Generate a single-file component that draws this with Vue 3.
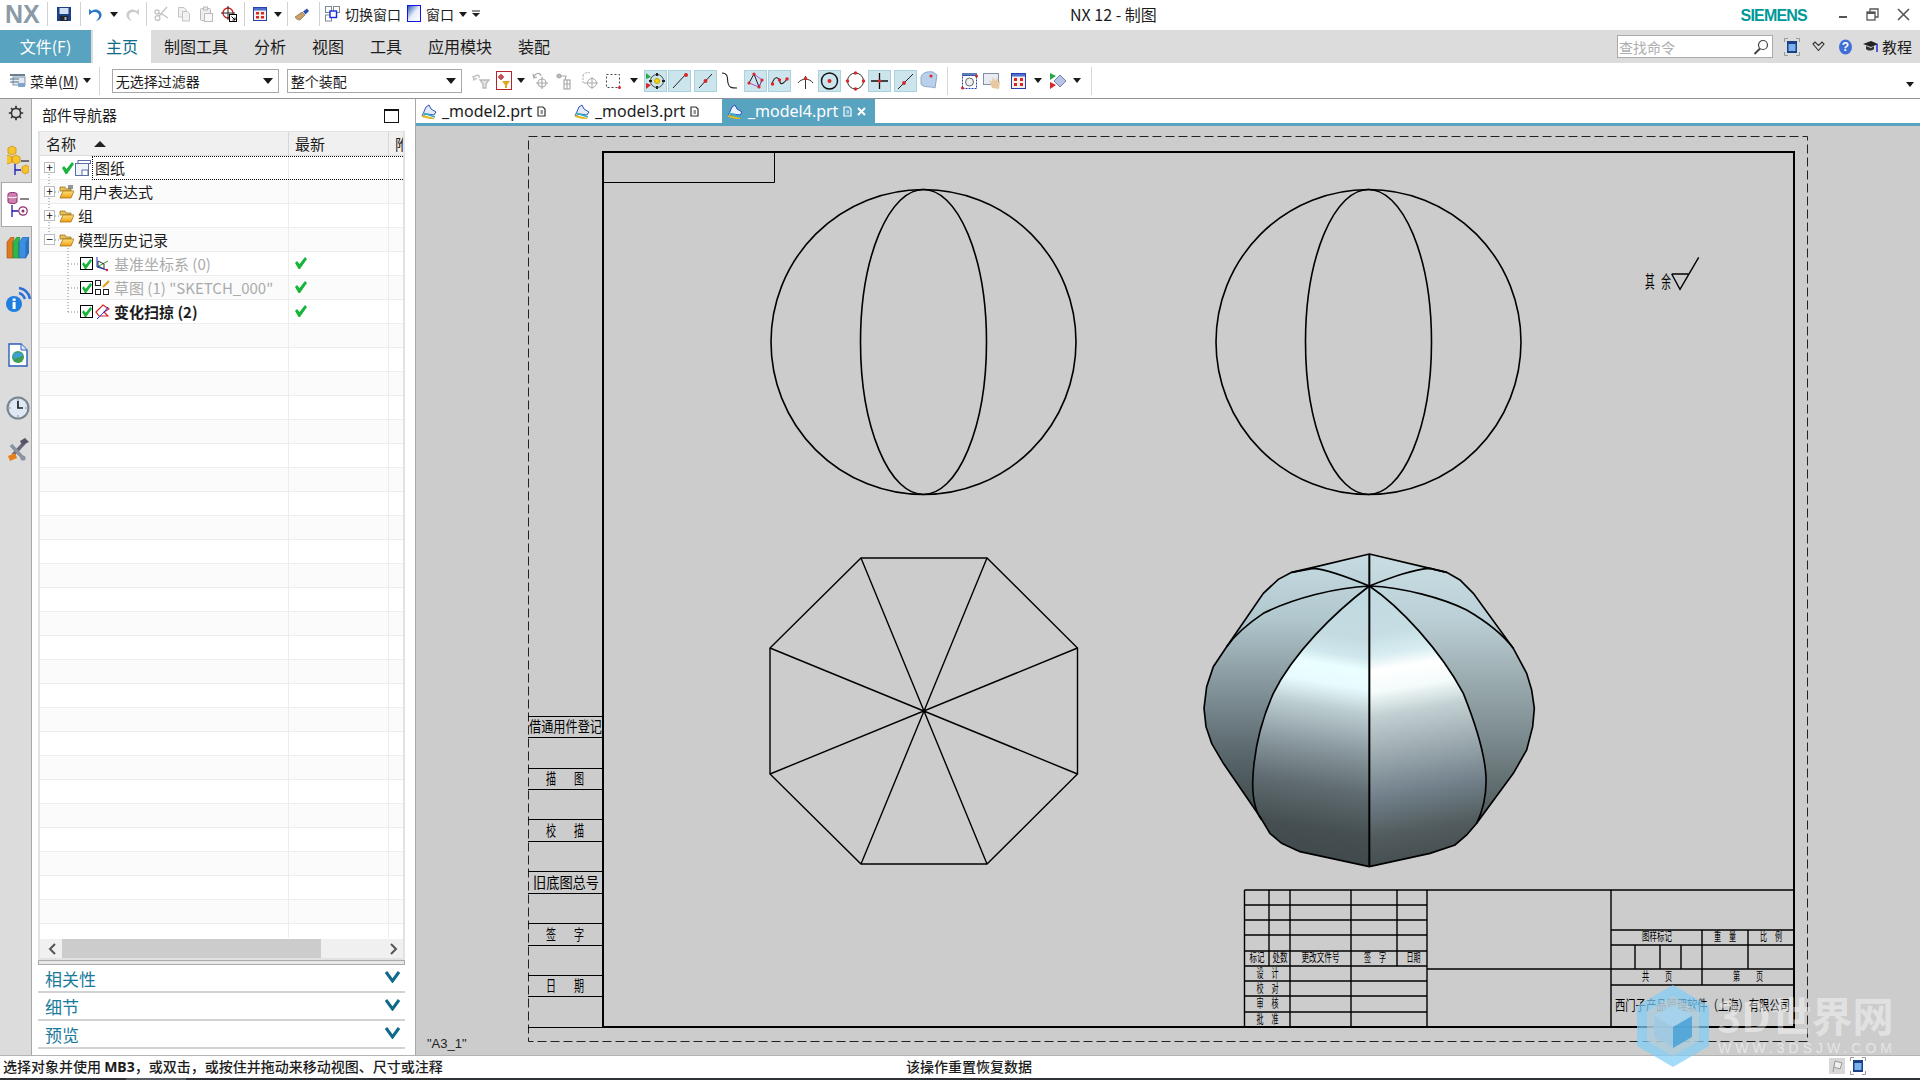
<template>
  <div class="app">
    <!-- title bar -->
    <header class="titlebar">
      <div class="qat">
        <span class="nx">NX</span>
        <i class="qsep"></i>
        <div class="qgrp g1">
          <svg width="16" height="16" viewBox="0 0 16 16"><rect x="1" y="1" width="14" height="14" fill="#1c3f86"/><rect x="3.5" y="2" width="9" height="6" fill="#cfe0f5"/><rect x="4" y="10" width="8" height="5" fill="#20242c"/><rect x="8.5" y="11" width="2" height="3" fill="#aab4c4"/></svg>
        </div>
        <i class="qsep"></i>
        <div class="qgrp g2">
          <svg width="14" height="16" viewBox="0 0 14 16"><path d="M1 3 V9 L3 7.5 C6 5 10 6 11 9 C11.5 11 10 13 8 15 C12 14 14 11 13.5 8 C12.5 3.5 7 2 3.5 5 Z" fill="#2a78c8"/></svg>
          <i class="arr"></i>
          <svg width="14" height="16" viewBox="0 0 14 16"><path d="M13 3 V9 L11 7.5 C8 5 4 6 3 9 C2.5 11 4 13 6 15 C2 14 0 11 .5 8 C1.5 3.5 7 2 10.5 5 Z" fill="#ccc"/></svg>
        </div>
        <i class="qsep"></i>
        <div class="qgrp g3">
          <svg width="15" height="16" viewBox="0 0 15 16" fill="none" stroke="#c4c4c4" stroke-width="1.4"><path d="M13 1 L5 10 M8 8 L14 12"/><circle cx="3.5" cy="12" r="2.4"/><circle cx="3" cy="6" r="2"/><path d="M4.5 7 L8 9"/></svg>
          <svg width="14" height="16" viewBox="0 0 14 16" fill="#f1f1f1" stroke="#c4c4c4"><path d="M1.5 1.5 H7 L9 3.5 V11 H1.5 Z"/><path d="M5.5 5.5 H10.5 L12.5 7.5 V15 H5.5 Z"/></svg>
          <svg width="14" height="16" viewBox="0 0 14 16" fill="#eee" stroke="#bbb"><rect x="1.5" y="2.5" width="10" height="12" rx="1"/><rect x="4.5" y="1" width="4" height="3"/><rect x="5.5" y="7.5" width="8" height="8" fill="#f8f8f8"/></svg>
          <svg width="16" height="16" viewBox="0 0 16 16" fill="none"><circle cx="7" cy="7" r="5" stroke="#cf1c1c" stroke-width="1.3"/><path d="M7 0 V14 M0 7 H14" stroke="#222"/><rect x="8.5" y="8.5" width="7" height="7" fill="#fff" stroke="#000"/><path d="M10.5 10.5 L14 14 M14 11.5 V14 H11.5" stroke="#000"/></svg>
        </div>
        <i class="qsep"></i>
        <div class="qgrp g4">
          <svg width="14" height="16" viewBox="0 0 14 16"><rect x=".5" y="1.5" width="13" height="13" fill="#f4f1e8" stroke="#2a3fae"/><rect x="1" y="2" width="12" height="2.5" fill="#4d6fd0"/><path d="M3 6 h3 v2.5 h-3z M8 6 h3 v2.5 h-3z M3 10 h3 v2.5 h-3z M8 10 h3 v2.5 h-3z" fill="#d8262a"/></svg>
          <i class="arr"></i>
        </div>
        <i class="qsep"></i>
        <div class="qgrp g5">
          <svg width="16" height="16" viewBox="0 0 16 16"><path d="M1 11 L8 6 L11 9 L6 14 C4 14 2 13 1 11Z" fill="#c9a06a" stroke="#7a6038" stroke-width=".6"/><path d="M9 5.5 L13 2.5 L15 5 L11.5 8.5 Z" fill="#2f4fb0"/></svg>
        </div>
        <i class="qsep"></i>
        <div class="qgrp g6">
          <svg width="15" height="16" viewBox="0 0 15 16" fill="none"><rect x=".5" y=".5" width="6" height="6" stroke="#7d8a96"/><rect x="8.5" y=".5" width="6" height="6" stroke="#7d8a96"/><rect x=".5" y="9" width="6" height="6" stroke="#7d8a96"/><rect x="5" y="5" width="6.5" height="6.5" fill="#fff" stroke="#1a2ae0" stroke-width="1.4"/></svg>
          <span class="qtext">切换窗口</span>
          <svg class="winico" width="14" height="18" viewBox="0 0 14 18"><defs><linearGradient id="qw" x1="0" y1="0" x2="1" y2="1"><stop offset="0" stop-color="#1c4fa8"/><stop offset=".5" stop-color="#e8eefa"/><stop offset="1" stop-color="#fff"/></linearGradient></defs><rect x=".5" y=".5" width="13" height="16" fill="url(#qw)" stroke="#1414e8"/></svg>
          <span class="qtext">窗口</span>
          <i class="arr"></i>
          <svg width="8" height="8" viewBox="0 0 8 8"><path d="M0 1 H8" stroke="#222"/><path d="M0 3 H8 L4 7Z" fill="#222"/></svg>
        </div>
      </div>
      <div class="apptitle">NX 12 - 制图</div>
      <div class="brand">SIEMENS</div>
      <div class="winbtns">
        <svg width="10" height="10" viewBox="0 0 10 10"><rect x="1" y="7" width="8" height="2" fill="#555"/></svg>
        <svg width="13" height="13" viewBox="0 0 13 13" fill="none" stroke="#555" stroke-width="1.3"><rect x="1" y="4" width="8" height="8"/><path d="M4 4 V1 H12 V9 H9"/><path d="M1 5 H9" stroke-width="2"/></svg>
        <svg width="13" height="13" viewBox="0 0 13 13" fill="none" stroke="#555" stroke-width="1.6"><path d="M1 1 L12 12 M12 1 L1 12"/></svg>
      </div>
    </header>

    <!-- ribbon tabs -->
    <nav class="ribbon">
      <div class="file-tab">文件(F)</div>
      <div class="rtab active">主页</div>
      <div v-for="t in ribbonTabs" :key="t" class="rtab">{{ t }}</div>
      <div class="rb-right">
        <div class="cmd-search">
          <span>查找命令</span>
          <svg width="16" height="16" viewBox="0 0 16 16" fill="none" stroke="#444" stroke-width="1.2"><circle cx="10" cy="6" r="4.5"/><path d="M7 9.5 L1.5 15" stroke-width="2"/></svg>
        </div>
        <svg class="rb-full" width="16" height="18" viewBox="0 0 16 18" fill="none"><path d="M.5 4 V.5 H4 M12 .5 H15.5 V4 M15.5 14 V17.5 H12 M4 17.5 H.5 V14" stroke="#999"/><rect x="3" y="3" width="10" height="12" fill="#1c3f86"/><rect x="4.5" y="6" width="7" height="7" fill="#7ab2ee"/></svg>
        <svg class="rb-chev" width="13" height="11" viewBox="0 0 13 11" fill="none" stroke="#333" stroke-width="1.1"><path d="M1 3 L3 1 L6.5 4.5 L10 1 L12 3 L6.5 9.5Z"/></svg>
        <svg class="rb-help" width="13" height="16" viewBox="0 0 13 16"><ellipse cx="6.5" cy="8" rx="6.5" ry="7.5" fill="#3f6fd8"/><text x="6.5" y="12" text-anchor="middle" fill="#fff" class="help-q">?</text></svg>
        <svg class="rb-cap" width="15" height="14" viewBox="0 0 15 14"><path d="M0 4 L8 1 L15 4 L8 7Z" fill="#222"/><path d="M3 6 V9 C5 11 9 11 11 9 V6 L8 8Z" fill="#333"/><path d="M14 4 V12" stroke="#1a1ae0" stroke-width="1.4"/></svg>
        <span class="rb-help-text">教程</span>
      </div>
    </nav>

    <!-- main toolbar -->
    <div class="toolbar">
      <svg class="tb-menu" width="16" height="15" viewBox="0 0 16 15"><rect x="0" y="1" width="15" height="2" fill="#6a7f92"/><rect x="3" y="4" width="12" height="8" fill="#e4eaf0" stroke="#7f93a6"/><path d="M0 6 H9 M0 9 H9" stroke="#54708a"/><rect x="8" y="10" width="7" height="4" fill="#7fa6cc"/></svg>
      <span class="tb-menu-text">菜单(<u>M</u>)</span>
      <i class="arr"></i>
      <i class="tsep first"></i>
      <div class="sel sel-a"><span>无选择过滤器</span><i class="arr big"></i></div>
      <div class="sel sel-b"><span>整个装配</span><i class="arr big"></i></div>

      <div class="ti m8"><svg width="20" height="18" viewBox="0 0 20 18" fill="none" stroke="#bbb" stroke-width="1.3"><path d="M3 5 C6 2 9 3 8 6 M2 4 L3 8 L6 6"/><path d="M9 8 H18 L15 12 V16 H12 V12Z" fill="#e4e4e4"/></svg></div>
      <div class="ti"><svg width="17" height="19" viewBox="0 0 17 19"><rect x=".5" y=".5" width="15" height="18" fill="#fff" stroke="#b4262a"/><path d="M5 3 V9 M2 6 H8" stroke="#b4262a"/><circle cx="5" cy="6" r="2" fill="none" stroke="#b4262a"/><path d="M6 10 H14 L11 14 V17 H9 V14Z" fill="#e5a31c"/></svg></div>
      <i class="arr m1"></i>
      <div class="ti m4"><svg width="18" height="19" viewBox="0 0 18 19" fill="none" stroke="#aaa" stroke-width="1.2"><path d="M3 6 C4 2 9 1 10 5 M2 3 L3 7 L6 6"/><circle cx="11" cy="12" r="4"/><path d="M11 6 V18 M5 12 H17"/></svg></div>
      <div class="ti"><svg width="18" height="19" viewBox="0 0 18 19" fill="none" stroke="#aaa" stroke-width="1.2"><circle cx="5" cy="5" r="2" fill="#bbb"/><path d="M6 5 H12 L11 9"/><rect x="10" y="9" width="6" height="9"/><path d="M10 13 H16 M13 9 V18"/></svg></div>
      <div class="ti m4"><svg width="18" height="19" viewBox="0 0 18 19" fill="none" stroke="#aaa"><path d="M2 4 A6 6 0 0 1 9 2" stroke-dasharray="2 1"/><path d="M2 4 V12 H6" stroke-dasharray="2 1"/><circle cx="11" cy="12" r="4.5"/><path d="M11 6 V18 M5 12 H17"/></svg></div>
      <div class="ti"><svg width="17" height="18" viewBox="0 0 17 18" fill="none"><rect x="1.5" y="2.5" width="13" height="13" stroke="#444" stroke-dasharray="2 2"/><circle cx="14.5" cy="15.5" r="1.5" fill="#d22"/></svg></div>
      <i class="arr m5"></i>

      <div class="tools-sel m6">
        <div class="tb on"><svg width="23" height="22" viewBox="0 0 23 22" fill="none"><path d="M2 3 L7 7 L2 9Z" fill="#29a84a"/><path d="M2 13 L7 15 L2 19Z" fill="#d8262a"/><circle cx="13" cy="11" r="6.5" stroke="#444"/><circle cx="13" cy="11" r="2.5" fill="#f4d800" stroke="#c9a000"/><path d="M13 3 V6 M13 16 V19 M5 11 H8 M18 11 H21" stroke="#222" stroke-width="2"/></svg></div>
        <div class="tb on m1"><svg width="23" height="22" viewBox="0 0 23 22" fill="none"><path d="M5 18 L18 4" stroke="#222"/><circle cx="18" cy="5" r="2" fill="#d8262a"/></svg></div>
        <div class="tb on m3"><svg width="23" height="22" viewBox="0 0 23 22" fill="none"><path d="M5 18 L18 4" stroke="#222"/><circle cx="11.5" cy="11" r="2" fill="#d8262a"/></svg></div>
        <div class="tb"><svg width="23" height="22" viewBox="0 0 23 22" fill="none" stroke="#222" stroke-width="1.1"><path d="M5 3 C12 3 10 10 11 13 C12 18 15 18 20 18"/></svg></div>
        <div class="tb on m4"><svg width="23" height="22" viewBox="0 0 23 22" fill="none"><path d="M5 13 L10 4 L15 17 L18 10" stroke="#222"/><path d="M5 13 L15 17 L18 10 L10 4" stroke="#b04ad0"/><circle cx="5" cy="13" r="1.6" fill="#d8262a"/><circle cx="10" cy="4" r="1.6" fill="#d8262a"/><circle cx="15" cy="17" r="1.6" fill="#d8262a"/><circle cx="18" cy="10" r="1.6" fill="#d8262a"/></svg></div>
        <div class="tb on m1"><svg width="23" height="22" viewBox="0 0 23 22" fill="none"><path d="M4 14 C7 4 11 8 12 12 C13 16 17 12 20 8" stroke="#222" stroke-width="1.1"/><circle cx="4.5" cy="14" r="1.7" fill="#d8262a"/><circle cx="11.5" cy="10" r="1.7" fill="#d8262a"/><circle cx="19" cy="9" r="1.7" fill="#d8262a"/></svg></div>
        <div class="tb m3"><svg width="23" height="22" viewBox="0 0 23 22" fill="none"><path d="M4 13 C7 8 16 8 19 13 M11.5 6 V19" stroke="#333"/><circle cx="11.5" cy="8.5" r="1.8" fill="#d8262a"/></svg></div>
        <div class="tb on m1"><svg width="23" height="22" viewBox="0 0 23 22" fill="none"><circle cx="11.5" cy="11" r="8" stroke="#111" stroke-width="1.4"/><circle cx="11.5" cy="11" r="2" fill="#d8262a"/></svg></div>
        <div class="tb m3"><svg width="23" height="22" viewBox="0 0 23 22" fill="none"><circle cx="11.5" cy="11" r="8" stroke="#333"/><circle cx="11.5" cy="3" r="1.7" fill="#d8262a"/><circle cx="11.5" cy="19" r="1.7" fill="#d8262a"/><circle cx="3.5" cy="11" r="1.7" fill="#d8262a"/><circle cx="19.5" cy="11" r="1.7" fill="#d8262a"/></svg></div>
        <div class="tb on m1"><svg width="23" height="22" viewBox="0 0 23 22"><path d="M11.5 3 V19 M3 11 H20" stroke="#111" stroke-width="1.3"/><circle cx="11.5" cy="11" r="1.8" fill="#d8262a"/></svg></div>
        <div class="tb on m3"><svg width="23" height="22" viewBox="0 0 23 22"><path d="M4 19 L19 4" stroke="#222"/><circle cx="10" cy="13" r="1.9" fill="#d8262a"/></svg></div>
        <div class="tb"><svg width="19" height="22" viewBox="0 0 19 22"><path d="M2 8 C2 3 8 1 14 2 L18 5 L16 18 C12 16 4 18 2 14Z" fill="#b9d0ea" stroke="#8ca8c8"/><circle cx="12" cy="6" r="1.6" fill="#d8262a"/></svg></div>
      </div>
      <i class="tsep"></i>
      <div class="ti"><svg width="17" height="18" viewBox="0 0 17 18" fill="none"><rect x="1" y="1" width="15" height="3" fill="#5d7fb8"/><rect x="1.5" y="3.5" width="14" height="13" stroke="#2a3fae" stroke-dasharray="2 1"/><circle cx="8.5" cy="10" r="4" stroke="#666" fill="#eee"/><circle cx="1.5" cy="16" r="1.5" fill="#d8262a"/><circle cx="15.5" cy="4" r="1.5" fill="#d8262a"/></svg></div>
      <div class="ti"><svg width="19" height="18" viewBox="0 0 19 18"><rect x=".5" y="1.5" width="15" height="11" fill="#e8ecf2" stroke="#7f8fa6"/><path d="M9 16 L6 8 L9 10 L10 5 L12 9 L14 6 L15 10 L17 9 L16 17Z" fill="#e6c9a0"/></svg></div>
      <div class="ti m3"><svg width="15" height="16" viewBox="0 0 15 16"><rect x=".5" y=".5" width="14" height="15" fill="#f4f1e8" stroke="#2a3fae"/><rect x="1" y="1" width="13" height="2.5" fill="#4d6fd0"/><path d="M3 5 h3 v3 h-3z M9 5 h3 v3 h-3z M3 10 h3 v3 h-3z M9 10 h3 v3 h-3z" fill="#d8262a"/></svg></div>
      <i class="arr m4"></i>
      <div class="ti m4"><svg width="19" height="18" viewBox="0 0 19 18"><path d="M2 1 L8 4 L2 8Z" fill="#29a84a"/><path d="M2 10 L8 13 L2 17Z" fill="#d8262a"/><path d="M6 9 L12 3 L18 9 L12 15Z" fill="#b8c4e4" stroke="#7080b0"/></svg></div>
      <i class="arr m4"></i>
      <i class="tsep last"></i>
      <i class="arr tb-end"></i>
    </div>

    <!-- body -->
    <main class="body">
      <aside class="rail">
        <div class="ri gear">
          <svg width="16" height="16" viewBox="0 0 16 16" fill="none" stroke="#333" stroke-width="1.6"><circle cx="8" cy="8" r="4.6"/><path d="M8 .8 V3 M8 13 V15.2 M.8 8 H3 M13 8 H15.2 M3 3 L4.6 4.6 M13 3 L11.4 4.6 M3 13 L4.6 11.4 M13 13 L11.4 11.4"/></svg>
        </div>
        <div class="ri cubes">
          <svg width="22" height="32" viewBox="0 0 22 32">
            <path d="M5 1 L9 3 V8 L5 10 L1 8 V3Z M1 10 L5 12 V17 L1 19 L-1 18 V11Z M9 10 L13 12 V17 L9 19 L5 17 V12Z" fill="#f6c52e" stroke="#d09010" stroke-width=".8"/>
            <path d="M15 22 L19 20 L22 22 V27 L18 29 L15 27Z" fill="#f6c52e" stroke="#d09010" stroke-width=".8"/>
            <path d="M14 16 H22" stroke="#111" stroke-width="1.1"/>
            <path d="M8 19 V30 M8 25 H14" stroke="#1a1ab0" stroke-width="1.3" fill="none"/>
          </svg>
        </div>
        <div class="ri active">
          <svg width="22" height="28" viewBox="0 0 22 28" fill="none"><path d="M1 3 C1 1 10 1 10 3 V11 C10 13 1 13 1 11Z" fill="#cd7fb0" stroke="#8a2a70"/><path d="M1 6 C4 7 7 7 10 6" stroke="#fff"/><path d="M13 8 H22" stroke="#111"/><path d="M5 14 V26 M5 20 H11" stroke="#1a1ab0" stroke-width="1.3"/><circle cx="16" cy="20" r="4.2" stroke="#8a2a70" stroke-width="1.2"/><circle cx="16" cy="20" r="1.5" fill="#8a2a70"/></svg>
        </div>
        <div class="ri books">
          <svg width="24" height="22" viewBox="0 0 24 22"><path d="M1 5 L5 0 H8 L7 5 V21 H1Z" fill="#e07a1e" stroke="#a0501a" stroke-width=".6"/><path d="M7 5 L11 0 H14 L13 5 V21 H7Z" fill="#2fb84a" stroke="#1a8030" stroke-width=".6"/><path d="M13 5 L17 0 H23 L20 5 V21 H13Z" fill="#3b8fe0" stroke="#1a5aa0" stroke-width=".6"/><path d="M20 5 L23 0 V16 L20 21Z" fill="#2a72c0"/></svg>
        </div>
        <div class="ri info">
          <svg width="26" height="28" viewBox="0 0 26 28"><path d="M14 2 C20 3 24 7 25 13 M14 7 C17 8 19 10 20 13" fill="none" stroke="#2e6fd8" stroke-width="2.4"/><circle cx="9" cy="18" r="8" fill="#1f7fe0"/><rect x="7.6" y="16" width="3" height="7" fill="#fff"/><rect x="7.6" y="12.5" width="3" height="2.4" fill="#fff"/></svg>
        </div>
        <div class="ri doc">
          <svg width="20" height="24" viewBox="0 0 20 24"><path d="M1 1 H13 L19 7 V23 H1Z" fill="#fff" stroke="#2a5fb8" stroke-width="1.4"/><path d="M13 1 V7 H19" fill="#dfe8f6" stroke="#2a5fb8"/><circle cx="10" cy="14" r="6" fill="#3f9e50"/><path d="M5 11 C9 9 13 9 15 12 C13 15 8 14 6 17" fill="#3ea0d8"/></svg>
        </div>
        <div class="ri clock">
          <svg width="24" height="24" viewBox="0 0 24 24"><circle cx="12" cy="12" r="11.5" fill="#7a848e"/><circle cx="12" cy="12" r="9.4" fill="#dfe9f6"/><path d="M12 5 V12 H17" fill="none" stroke="#222" stroke-width="1.7"/><path d="M12 3.4 V4.6 M12 19.4 V20.6 M3.4 12 H4.6 M19.4 12 H20.6" stroke="#556"/></svg>
        </div>
        <div class="ri tools">
          <svg width="22" height="24" viewBox="0 0 22 24"><path d="M19 3 L6 17" stroke="#667" stroke-width="3.4"/><path d="M13 3 L18 0 L22 4 L15 7Z" fill="#556"/><path d="M4 7 L15 19" stroke="#8a94a0" stroke-width="3.4"/><circle cx="16" cy="20" r="2.6" fill="#8a94a0"/><path d="M1 18 L8 15 L10 20 L3 23Z" fill="#e8801a"/></svg>
        </div>
      </aside>

      <section class="panel">
        <div class="panel-head">
          <span>部件导航器</span>
          <i class="panel-win"></i>
        </div>
        <div class="nav-table">
          <div class="row header">
            <div class="c-name">名称<i class="sort"></i></div>
            <div class="c-latest">最新</div>
            <div class="c-more">附</div>
          </div>
          <svg class="tree-lines" width="60" height="200" viewBox="0 0 60 200" fill="none" stroke="#888" stroke-dasharray="1 2">
            <path d="M9 18 V30 M9 42 V54 M9 66 V78 M15 36 H19 M15 60 H19 M15 84 H19"/>
            <path d="M28 92 V156 M28 108 H40 M28 132 H40 M28 156 H40"/>
          </svg>
          <div v-for="r in rows" :key="r.text" class="row" :class="{ focus: r.focus }">
            <div class="c-name" :class="'lv' + r.level">
              <i v-if="r.level === 0" class="exp">{{ r.open ? '−' : '+' }}</i>
              <svg v-if="r.kind === 'sheet'" width="12" height="12" viewBox="0 0 12 12" class="chk"><path d="M0 6 L2 4 L4.5 7 L10 0 L12 2 L5 12 L3.5 12Z" fill="#18b43c"/></svg>
              <svg v-if="r.kind === 'sheet'" width="16" height="16" viewBox="0 0 16 16" class="sheet" fill="#f1f4fa" stroke="#5c6ea8"><rect x=".5" y="3.5" width="13" height="12"/><rect x="3" y=".5" width="12.5" height="3" fill="#fff"/><rect x="7" y="10" width="6" height="5.5" fill="#fff"/></svg>
              <svg v-if="r.kind === 'folder'" width="15" height="14" viewBox="0 0 15 14" class="folder"><defs><linearGradient :id="'f' + r.text.length" x1="0" y1="0" x2="0" y2="1"><stop offset="0" stop-color="#ffe27a"/><stop offset="1" stop-color="#f39c12"/></linearGradient></defs><path d="M1 2 H6 L7 4 H12 V6 H1Z" fill="#e7c05a" stroke="#9a6a10" stroke-width=".7"/><path d="M1 13 L4 6 H15 L12 13Z" :fill="'url(#f' + r.text.length + ')'" stroke="#9a6a10" stroke-width=".7"/><path v-if="r.mark" d="M9 1 H14 M9 3 H14" stroke="#333"/></svg>
              <i v-if="r.level === 1" class="cbox"><svg width="10" height="10" viewBox="0 0 12 12"><path d="M0 6 L2 4 L4.5 7 L10 0 L12 2 L5 12 L3.5 12Z" fill="#18b43c"/></svg></i>
              <svg v-if="r.kind === 'csys'" width="15" height="16" viewBox="0 0 15 16" class="fe" fill="none"><path d="M2 1 V11 L12 14" stroke="#1a2ae0"/><path d="M2 11 L13 5" stroke="#2a9a3a"/><path d="M3 5 L9 8 L9 13 L3 10Z" stroke="#333"/><circle cx="12" cy="14" r="1.2" fill="#d8262a"/></svg>
              <svg v-if="r.kind === 'sketch'" width="15" height="15" viewBox="0 0 15 15" class="fe" fill="none" stroke="#222"><rect x=".5" y=".5" width="5" height="5"/><rect x=".5" y="9.5" width="5" height="5"/><rect x="8.5" y="9.5" width="5" height="5"/><path d="M8 7 L14 1" stroke="#e0a010" stroke-width="2"/></svg>
              <svg v-if="r.kind === 'sweep'" width="15" height="16" viewBox="0 0 15 16" class="fe" fill="none"><path d="M1 8 L8 1 L14 5 L9 8 L13 12 L4 12Z" stroke="#d8262a" stroke-width="1.2"/><path d="M2 15 C5 12 9 9 13 3" stroke="#1a2ae0"/></svg>
              <span :class="{ muted: r.muted, strong: r.strong }">{{ r.text }}</span>
            </div>
            <div class="c-latest"><svg v-if="r.level === 1" width="12" height="12" viewBox="0 0 12 12"><path d="M0 6 L2 4 L4.5 7 L10 0 L12 2 L5 12 L3.5 12Z" fill="#18b43c"/></svg></div>
            <div class="c-more"></div>
          </div>
          <div v-for="n in 25" :key="n" class="row">
            <div class="c-name"></div>
            <div class="c-latest"></div>
            <div class="c-more"></div>
          </div>
          <div class="row last"><div class="c-name"></div><div class="c-latest"></div><div class="c-more"></div></div>
          <div class="hscroll">
            <svg width="8" height="12" viewBox="0 0 8 12" fill="none" stroke="#555" stroke-width="2"><path d="M7 1 L2 6 L7 11"/></svg>
            <i class="thumb"></i>
            <svg width="8" height="12" viewBox="0 0 8 12" fill="none" stroke="#555" stroke-width="2"><path d="M1 1 L6 6 L1 11"/></svg>
          </div>
        </div>
        <div class="splitter"></div>
        <div v-for="s in sections" :key="s" class="accordion">
          <span>{{ s }}</span>
          <svg width="15" height="12" viewBox="0 0 15 12" fill="none" stroke="#0d6a88" stroke-width="3"><path d="M1 1 L7.5 10 L14 1"/></svg>
        </div>
      </section>

      <section class="graphics">
        <div class="doc-tabs">
          <div v-for="t in docTabs" :key="t.name" class="doc-tab" :class="{ active: t.active }">
            <svg width="16" height="15" viewBox="0 0 16 15" fill="none"><path d="M1 12 L5 3 L8 1 L10 5 L15 8 L13 11 L6 10Z" :fill="t.active ? '#e8f2ff' : '#e4ecfa'" stroke="#3050c0"/><path d="M1 12 L13 15" stroke="#e0b820" stroke-width="2"/><path d="M2 9 L14 13" stroke="#38b0c0" stroke-width="1.4"/></svg>
            <span>{{ t.name }}</span>
            <svg width="9" height="11" viewBox="0 0 9 11" fill="none" :stroke="t.active ? '#fff' : '#333'" stroke-width="1.2"><path d="M1 1 H6 L8 3 V10 H1Z"/><path d="M3.5 5 H6 M3.5 7 H6"/></svg>
            <svg v-if="t.active" width="9" height="9" viewBox="0 0 9 9" stroke="#fff" stroke-width="2"><path d="M1 1 L8 8 M8 1 L1 8"/></svg>
          </div>
        </div>
        <div class="canvas">
          <svg class="sheet-svg" width="1504" height="929" viewBox="416 126 1504 929">
            <defs>
              <linearGradient id="sideL" gradientUnits="userSpaceOnUse" x1="0" y1="72" x2="0" y2="1010">
                <stop offset="0" stop-color="#c6dce2"/><stop offset=".2" stop-color="#b2c8cf"/><stop offset=".34" stop-color="#95a8ae"/><stop offset=".5" stop-color="#74848a"/><stop offset=".66" stop-color="#566367"/><stop offset=".85" stop-color="#3f494b"/><stop offset="1" stop-color="#3c4547"/>
              </linearGradient>
              <linearGradient id="sideR" gradientUnits="userSpaceOnUse" x1="0" y1="72" x2="0" y2="1010">
                <stop offset="0" stop-color="#c9dee3"/><stop offset=".2" stop-color="#bcd1d7"/><stop offset=".34" stop-color="#a5b7bb"/><stop offset=".5" stop-color="#8a9a9e"/><stop offset=".66" stop-color="#6f7d80"/><stop offset=".85" stop-color="#4e585a"/><stop offset="1" stop-color="#414a4c"/>
              </linearGradient>
              <linearGradient id="lobeL" gradientUnits="userSpaceOnUse" x1="620" y1="100" x2="470" y2="1000">
                <stop offset="0" stop-color="#bfd8df"/><stop offset=".26" stop-color="#c3dbe1"/><stop offset=".32" stop-color="#d0e8ed"/><stop offset=".36" stop-color="#eaffff"/><stop offset=".42" stop-color="#e8fcff"/><stop offset=".5" stop-color="#bccdd1"/><stop offset=".62" stop-color="#8d9ca2"/><stop offset=".76" stop-color="#5f6b70"/><stop offset=".9" stop-color="#454f51"/><stop offset="1" stop-color="#40494b"/>
              </linearGradient>
              <linearGradient id="lobeR" gradientUnits="userSpaceOnUse" x1="516" y1="100" x2="666" y2="1000">
                <stop offset="0" stop-color="#bfd8df"/><stop offset=".24" stop-color="#c5dde3"/><stop offset=".31" stop-color="#d6ecf0"/><stop offset=".36" stop-color="#fff"/><stop offset=".43" stop-color="#f4fbfb"/><stop offset=".51" stop-color="#c2d0d3"/><stop offset=".63" stop-color="#9eacb1"/><stop offset=".77" stop-color="#71808a"/><stop offset=".9" stop-color="#525c5e"/><stop offset="1" stop-color="#454e50"/>
              </linearGradient>
              <clipPath id="rightHalf"><rect x="568" y="0" width="600" height="1100"/></clipPath>
            </defs>

            <!-- sheet borders -->
            <rect x="528.5" y="136.5" width="1279" height="905" fill="none" stroke="#222" stroke-dasharray="9 4"/>
            <rect x="603" y="152" width="1191" height="875" fill="none" stroke="#000" stroke-width="2"/>
            <path d="M603 182.5 H774.5 V152" fill="none" stroke="#000"/>

            <!-- top views -->
            <g fill="none" stroke="#000" stroke-width="1.6">
              <circle cx="923.5" cy="342" r="152.5"/>
              <ellipse cx="923.5" cy="342" rx="63" ry="152.5"/>
              <circle cx="1368.5" cy="342" r="152.5"/>
              <ellipse cx="1368.5" cy="342" rx="63" ry="152.5"/>
            </g>

            <!-- octagon section -->
            <g fill="none" stroke="#000" stroke-width="1.4">
              <path d="M861 558 H987 L1077.5 648 V774 L987 864 H861 L770 774 V648 Z"/>
              <path d="M861 558 L987 864 M987 558 L861 864 M770 648 L1077.5 774 M1077.5 648 L770 774"/>
            </g>

            <!-- shaded model, traced on a 3x grid -->
            <g transform="translate(1180 530) scale(.33333)">
              <path :d="solidOutline" fill="url(#sideL)"/>
              <path :d="solidOutline" fill="url(#sideR)" clip-path="url(#rightHalf)"/>
              <path d="M568 168 C460 250 340 370 280 490 C240 580 220 680 218 760 C218 810 230 850 245 870 L270 910 L305 940 L360 965 L568 1010 Z" fill="url(#lobeL)"/>
              <path d="M568 168 C660 230 780 360 850 490 C890 590 915 680 918 740 C920 800 905 850 890 880 L860 915 L825 945 L750 970 L568 1010 Z" fill="url(#lobeR)"/>
              <g fill="none" stroke="#000" stroke-width="5">
                <path :d="solidOutline"/>
                <path d="M568 72 V1010" stroke-width="6"/>
                <path d="M568 168 C460 250 340 370 280 490 C240 580 220 680 218 760 C218 810 230 850 245 870"/>
                <path d="M568 168 C660 230 780 360 850 490 C890 590 915 680 918 740 C920 800 905 850 890 880"/>
                <path d="M568 168 C500 140 440 118 400 115 L335 127"/>
                <path d="M568 168 C640 140 700 118 750 115 L800 127"/>
                <path d="M568 168 C470 172 340 205 250 250 C205 280 165 315 140 350"/>
                <path d="M568 168 C670 172 790 205 860 240 C920 275 970 315 1000 355"/>
              </g>
            </g>

            <!-- roughness note -->
            <path d="M1671.7 274 H1688.3 M1671.7 274 L1680 289.3 L1698.7 257.3" fill="none" stroke="#000" stroke-width="1.4"/>
            <text x="1645" y="288" class="dwg" textLength="26" lengthAdjust="spacingAndGlyphs" font-size="17">{{ '其   余' }}</text>

            <!-- left strip -->
            <path v-for="y in stripLines" :key="y" :d="'M528 ' + (y + .5) + ' H603'" stroke="#000" stroke-width="1"/>
            <text v-for="t in stripLabels" :key="t.text" :x="t.x" :y="t.y" class="dwg" font-size="15" :textLength="t.w" lengthAdjust="spacingAndGlyphs">{{ t.text }}</text>

            <!-- title block -->
            <g stroke="#000" stroke-width="1.4" fill="none">
              <path d="M1244.5 890 H1794 M1244.5 890 V1027 M1269 890 V966 M1290 890 V1027 M1351 890 V1027 M1397 890 V966 M1427 890 V1027 M1611 890 V1027"/>
              <path d="M1244.5 905 H1427 M1244.5 920 H1427 M1244.5 935 H1427 M1244.5 951 H1427 M1244.5 966 H1427 M1244.5 981 H1427 M1244.5 996 H1427 M1244.5 1012 H1427"/>
              <path d="M1427 969 H1794 M1611 930 H1794 M1611 945 H1794 M1611 985 H1794"/>
              <path d="M1702 930 V985 M1748 930 V969 M1635 945 V969 M1660 945 V969 M1681 945 V969"/>
            </g>
            <text v-for="t in blockLabels" :key="t.text + t.x" :x="t.x" :y="t.y" class="dwg" :font-size="t.size || 12" :textLength="t.w" lengthAdjust="spacingAndGlyphs">{{ t.text }}</text>

            <text x="427" y="1048" class="sheet-name">"A3_1"</text>
          </svg>
        </div>
      </section>
    </main>

    <!-- status bar -->
    <footer class="status">
      <span class="st-left">选择对象并使用 <b>MB3</b>，或双击，或按住并拖动来移动视图、尺寸或注释</span>
      <span class="st-mid">该操作重置恢复数据</span>
      <svg class="st-ico" width="16" height="16" viewBox="0 0 16 16"><rect width="16" height="16" fill="#d8d8d8"/><path d="M4 14 L6 3 L13 5 L11 11 L5 9" fill="#f0f0f0" stroke="#999"/></svg>
      <svg class="st-ico" width="16" height="18" viewBox="0 0 16 18" fill="none"><path d="M.5 4 V.5 H4 M12 .5 H15.5 V4 M15.5 14 V17.5 H12 M4 17.5 H.5 V14" stroke="#999"/><rect x="3" y="3" width="10" height="12" fill="#1c3f86"/><rect x="4.5" y="6" width="7" height="7" fill="#7ab2ee"/></svg>
    </footer>
    <div class="taskstrip"><i></i></div>

    <!-- site watermark over the corner -->
    <svg class="watermark" width="290" height="90" viewBox="1630 980 290 90">
      <path d="M1673 985 L1709 1006 V1046 L1673 1067 L1637 1046 V1006 Z" fill="#7fcdf7" opacity=".72"/>
      <path d="M1673 996 L1699 1011 V1041 L1673 1056 L1647 1041 V1011 Z" fill="#cccccc" opacity=".55"/>
      <path d="M1673 1005 L1692 1016 L1673 1027 L1654 1016 Z" fill="#a4d3ee" opacity=".9"/>
      <path d="M1654 1016 L1673 1027 V1048 L1654 1037 Z" fill="#9cc9e4" opacity=".8"/>
      <path d="M1692 1016 L1673 1027 V1048 L1692 1037 Z" fill="#3d9fd6" opacity=".8"/>
      <text x="1717" y="1032" class="wm-big">3D世界网</text>
      <text x="1718" y="1053" class="wm-small" textLength="174">WWW.3DSJW.COM</text>
    </svg>
  </div>
</template>

<script setup>
const ribbonTabs = ['制图工具', '分析', '视图', '工具', '应用模块', '装配']

const rows = [
  { level: 0, kind: 'sheet', text: '图纸', focus: true },
  { level: 0, kind: 'folder', text: '用户表达式', mark: true },
  { level: 0, kind: 'folder', text: '组' },
  { level: 0, kind: 'folder', text: '模型历史记录', open: true },
  { level: 1, kind: 'csys', text: '基准坐标系 (0)', muted: true },
  { level: 1, kind: 'sketch', text: '草图 (1) "SKETCH_000"', muted: true },
  { level: 1, kind: 'sweep', text: '变化扫掠 (2)', strong: true }
]

const sections = ['相关性', '细节', '预览']

const docTabs = [
  { name: '_model2.prt' },
  { name: '_model3.prt' },
  { name: '_model4.prt', active: true }
]

const solidOutline =
  'M568 72 L750 115 L800 127 L840 150 L880 190 L1000 355 L1040 430 L1055 480 L1063 535 L1058 590 L1040 660 L1000 730 L890 880 L860 915 L825 945 L750 970 L568 1010 L360 965 L305 940 L270 910 L240 860 L130 700 L95 640 L78 590 L72 535 L80 470 L100 410 L140 350 L250 190 L295 148 L335 127 L400 112 Z'

const stripLines = [716, 737, 768, 789, 819, 841, 871, 893, 923, 945, 975, 996, 1027]

// 标注的字是窄长的，靠 textLength 压窄
const wide = '        '
const stripLabels = [
  { text: '借通用件登记', x: 529, y: 732, w: 73 },
  { text: '描' + wide + '图', x: 546, y: 784, w: 38 },
  { text: '校' + wide + '描', x: 546, y: 836, w: 38 },
  { text: '旧底图总号', x: 533, y: 888, w: 66 },
  { text: '签' + wide + '字', x: 546, y: 940, w: 38 },
  { text: '日' + wide + '期', x: 546, y: 991, w: 38 }
]

const gap5 = '     '
const gap10 = gap5 + gap5
const blockLabels = [
  { text: '标记', x: 1249.5, y: 962, w: 15 },
  { text: '处数', x: 1272.5, y: 962, w: 15 },
  { text: '更改文件号', x: 1301.5, y: 962, w: 38 },
  { text: '签' + gap5 + '字', x: 1364, y: 962, w: 22 },
  { text: '日期', x: 1406.5, y: 962, w: 14 },
  { text: '设' + gap5 + '计', x: 1256.5, y: 978, w: 22 },
  { text: '校' + gap5 + '对', x: 1256.5, y: 993, w: 22 },
  { text: '审' + gap5 + '核', x: 1256.5, y: 1008, w: 22 },
  { text: '批' + gap5 + '准', x: 1256.5, y: 1024, w: 22 },
  { text: '图样标记', x: 1642, y: 941, w: 30 },
  { text: '重' + gap5 + '量', x: 1714, y: 941, w: 22 },
  { text: '比' + gap5 + '例', x: 1760, y: 941, w: 22 },
  { text: '共' + gap10 + '页', x: 1642, y: 981, w: 30 },
  { text: '第' + gap10 + '页', x: 1733, y: 981, w: 30 },
  { text: '西门子产品管理软件（上海）有限公司', x: 1615, y: 1010, w: 175, size: 14 }
]
</script>

<style>
html,
body {
  margin: 0;
  overflow: hidden;
  background: #fff;
}
</style>

<style scoped>
.app {
  position: relative;
  width: 1920px;
  height: 1080px;
  overflow: hidden;
  display: flex;
  flex-direction: column;
  font-family: "Noto Sans CJK SC", "Noto Sans", sans-serif;
  font-size: 15px;
  color: #1c1c1c;
  background: #fff;
}
i {
  font-style: normal;
  display: block;
  flex: none;
}
svg {
  display: block;
  flex: none;
}
.arr {
  width: 0;
  height: 0;
  border-left: 4px solid transparent;
  border-right: 4px solid transparent;
  border-top: 5px solid #1a1a1a;
}
.arr.big {
  border-left-width: 5px;
  border-right-width: 5px;
  border-top-width: 6px;
}

/* title bar */
.titlebar {
  height: 30px;
  flex: none;
  box-sizing: border-box;
  padding-bottom: 2px;
  display: flex;
  align-items: center;
}
.qat {
  width: 1070px;
  flex: none;
  display: flex;
  align-items: center;
  height: 100%;
}
.nx {
  width: 47px;
  padding-left: 5px;
  box-sizing: border-box;
  font-family: "Liberation Sans", sans-serif;
  font-weight: 700;
  font-size: 25px;
  line-height: 30px;
  color: #8b9aa8;
}
.qsep {
  width: 1px;
  height: 24px;
  background: #d2d2d2;
}
.qgrp {
  display: flex;
  align-items: center;
}
.g1 { padding: 0 8px; }
.g2 { padding: 0 6px 0 7px; gap: 8px; }
.g3 { padding: 0 7px; gap: 8px; }
.g4 { padding: 0 5px 0 8px; gap: 7px; }
.g5 { padding: 0 9px 0 6px; }
.g6 { padding: 0 0 0 5px; gap: 5px; }
.qtext {
  font-size: 14px;
  line-height: 20px;
}
.winico {
  margin-left: 1px;
}
.apptitle {
  font-size: 16px;
  white-space: nowrap;
}
.brand {
  margin-left: auto;
  margin-top: 3px;
  font-family: "Liberation Sans", sans-serif;
  font-weight: 700;
  font-size: 16px;
  letter-spacing: -0.8px;
  color: #009999;
}
.winbtns {
  display: flex;
  align-items: center;
  gap: 18px;
  margin-left: 31px;
  padding-right: 10px;
}

/* ribbon */
.ribbon {
  height: 33px;
  flex: none;
  display: flex;
  background: #dcdcdc;
  font-size: 16px;
  line-height: 32px;
}
.file-tab {
  width: 91px;
  text-align: center;
  background: #58a3bf;
  color: #fff;
}
.rtab {
  padding: 0 13px;
}
.rtab.active {
  margin-left: 2px;
  background: #fff;
  color: #0d6a88;
}
.rb-right {
  margin-left: auto;
  display: flex;
  align-items: center;
  padding-right: 8px;
}
.cmd-search {
  width: 156px;
  height: 23px;
  box-sizing: border-box;
  display: flex;
  align-items: center;
  justify-content: space-between;
  padding: 0 3px 0 1px;
  background: #fff;
  border: 1px solid #aaa;
  color: #aeaeae;
  font-size: 14px;
  line-height: 20px;
}
.rb-full { margin-left: 11px; }
.rb-chev { margin-left: 12px; }
.rb-help { margin-left: 14px; }
.rb-cap { margin-left: 11px; }
.rb-help-text {
  margin-left: 4px;
  font-size: 15px;
}
.help-q {
  font-family: "Liberation Sans", sans-serif;
  font-size: 12px;
  font-weight: 700;
}

/* main toolbar */
.toolbar {
  height: 36px;
  flex: none;
  box-sizing: border-box;
  display: flex;
  align-items: center;
  border-bottom: 1px solid #8e9499;
  padding-left: 10px;
}
.tb-menu-text {
  margin: 0 4px 0 4px;
  font-size: 14px;
}
.tsep {
  width: 1px;
  height: 28px;
  background: #d6d6d6;
  margin: 0 10px 0 7px;
}
.tsep.first {
  margin: 0 12px 0 8px;
}
.tsep.last {
  margin: 0;
  margin-left: 10px;
}
.sel {
  height: 24px;
  box-sizing: border-box;
  border: 1px solid #a8a8a8;
  display: flex;
  align-items: center;
  justify-content: space-between;
  padding: 0 5px 0 3px;
  font-size: 14px;
}
.sel-a {
  width: 167px;
  margin-right: 8px;
}
.sel-b {
  width: 175px;
}
.ti {
  width: 23px;
  height: 22px;
  display: flex;
  align-items: center;
  justify-content: center;
}
.m1 { margin-left: 1px; }
.m3 { margin-left: 3px; }
.m4 { margin-left: 4px; }
.m5 { margin-left: 5px; }
.m6 { margin-left: 6px; }
.m8 { margin-left: 8px; }
.tools-sel {
  display: flex;
  align-items: center;
}
.tb {
  width: 23px;
  height: 22px;
  box-sizing: border-box;
  display: flex;
  align-items: center;
  justify-content: center;
}
.tb.on {
  background: #cce5ec;
  box-shadow: inset 0 0 0 1px #a9d2de;
}
.tb-end {
  margin-left: auto;
  margin-right: 6px;
  margin-top: 8px;
}

/* body */
.body {
  flex: 1;
  min-height: 0;
  display: flex;
}
.rail {
  width: 32px;
  flex: none;
  box-sizing: border-box;
  background: #dcdcdc;
  border-right: 1px solid #a8a8a8;
  display: flex;
  flex-direction: column;
  align-items: center;
}
.ri {
  display: flex;
  align-items: center;
  justify-content: center;
  width: 100%;
  box-sizing: border-box;
  padding-left: 4px;
}
.ri.gear { height: 28px; margin-bottom: 13px; padding-left: 0; }
.ri.cubes { height: 42px; }
.ri.active {
  height: 45px;
  width: 31px;
  margin-left: 2px;
  padding-left: 2px;
  background: #fff;
  border: 1px solid #aaa;
  border-right: none;
}
.ri.books { height: 41px; }
.ri.info { height: 64px; }
.ri.doc { height: 46px; }
.ri.clock { height: 60px; }
.ri.tools { height: 24px; }

.panel {
  width: 384px;
  flex: none;
  box-sizing: border-box;
  background: #fff;
  padding: 0 10px 0 6px;
  border-right: 1px solid #a8a8a8;
}
.panel-head {
  height: 32px;
  box-sizing: border-box;
  display: flex;
  align-items: center;
  justify-content: space-between;
  padding: 0 6px 2px 4px;
  font-size: 15px;
}
.panel-win {
  width: 13px;
  height: 11px;
  border: 1px solid #111;
  border-top-width: 2px;
  margin-top: 3px;
}
.nav-table {
  position: relative;
  height: 829px;
  box-sizing: border-box;
  border: 2px solid #e2e2e2;
  border-top-width: 1px;
  overflow: hidden;
}
.row {
  position: relative;
  height: 24px;
  box-sizing: border-box;
  display: grid;
  grid-template-columns: 248px 100px 1fr;
  border-bottom: 1px solid #ededed;
  line-height: 23px;
}
.row:nth-child(even) {
  background: #fbfbfb;
}
.row.last {
  height: 14px;
  border-bottom: none;
  background: #fff;
}
.row > div + div {
  border-left: 1px solid #ededed;
}
.row.header {
  background: #f0f0f0;
  border-bottom: 1px solid #dcdcdc;
}
.row.header > div {
  padding-left: 6px;
  display: flex;
  align-items: center;
}
.row.header > div + div {
  border-left: 1px solid #d8d8d8;
}
.c-more {
  overflow: hidden;
}
.sort {
  width: 0;
  height: 0;
  margin-left: 18px;
  border-left: 6px solid transparent;
  border-right: 6px solid transparent;
  border-bottom: 6px solid #222;
}
.c-name {
  display: flex;
  align-items: center;
  white-space: nowrap;
}
.c-name.lv0 {
  padding-left: 4px;
}
.c-name.lv1 {
  padding-left: 40px;
}
.exp {
  width: 11px;
  height: 11px;
  box-sizing: border-box;
  border: 1px solid #bdbdbd;
  background: #fff;
  font-size: 12px;
  line-height: 8px;
  text-align: center;
  color: #111;
  margin-right: 4px;
}
.chk {
  margin-left: 3px;
  margin-right: 1px;
}
.sheet {
  margin-right: 4px;
}
.folder {
  margin-right: 4px;
}
.cbox {
  width: 11px;
  height: 11px;
  border: 1px solid #000;
  background: #fff;
  display: flex;
  align-items: center;
  justify-content: center;
  margin-right: 2px;
}
.fe {
  margin-right: 4px;
}
.muted {
  color: #ababab;
}
.strong {
  font-weight: 700;
}
.c-latest svg {
  margin: 5px 0 0 6px;
}
.row.focus::after {
  content: "";
  position: absolute;
  left: 52px;
  right: 0;
  top: 0;
  bottom: -1px;
  border: 1px dotted #111;
  border-right: none;
  pointer-events: none;
}
.tree-lines {
  position: absolute;
  left: 0;
  top: 24px;
  z-index: 1;
  pointer-events: none;
}
.hscroll {
  height: 19px;
  display: flex;
  align-items: center;
  justify-content: space-between;
  padding: 0 5px 0 8px;
  background: #f0f0f0;
  position: absolute;
  left: 0;
  right: 0;
  bottom: 0;
}
.thumb {
  width: 259px;
  height: 19px;
  background: #cccccc;
  margin-right: 65px;
  margin-left: 1px;
}
.splitter {
  height: 5px;
  box-sizing: border-box;
  background: #e8e8e8;
  border: 1px solid #aaa;
}
.accordion {
  height: 28px;
  box-sizing: border-box;
  display: flex;
  align-items: center;
  justify-content: space-between;
  padding: 0 5px 0 7px;
  border-bottom: 2px solid #d2d2d2;
  font-size: 17px;
  color: #1a7a9c;
}
.accordion svg {
  margin-top: -2px;
}

/* graphics window */
.graphics {
  flex: 1;
  min-width: 0;
  display: flex;
  flex-direction: column;
}
.doc-tabs {
  height: 27px;
  flex: none;
  box-sizing: border-box;
  display: flex;
  border-bottom: 3px solid #58a3bf;
  font-size: 16px;
  line-height: 24px;
}
.doc-tab {
  width: 153px;
  box-sizing: border-box;
  padding: 0 0 0 5px;
  display: flex;
  align-items: center;
  gap: 5px;
  font-family: "Noto Sans", sans-serif;
}
.doc-tab.active {
  background: #58a3bf;
  color: #fff;
}
.canvas {
  flex: 1;
  min-height: 0;
  background: #cccccc;
}
.dwg {
  font-family: "Noto Sans CJK SC", sans-serif;
  fill: #000;
  white-space: pre;
}
.sheet-name {
  font-family: "Liberation Sans", sans-serif;
  font-size: 13px;
  fill: #222;
}

/* status bar */
.status {
  height: 23px;
  flex: none;
  box-sizing: border-box;
  display: flex;
  align-items: center;
  padding-bottom: 3px;
  border-top: 1px solid #b4b4b4;
  font-size: 14px;
  font-weight: 500;
  background: #fff;
}
.status b {
  font-family: "Noto Sans", sans-serif;
  font-weight: 700;
}
.st-left {
  width: 906px;
  padding-left: 3px;
  box-sizing: border-box;
  flex: none;
}
.st-mid {
  width: 923px;
  flex: none;
}
.st-ico {
  margin-right: 5px;
}
.taskstrip {
  height: 2px;
  flex: none;
  background: #2e3236;
}
.taskstrip i {
  width: 60px;
  height: 2px;
  margin-left: 126px;
  background: #5a5e62;
}

.watermark {
  position: absolute;
  left: 1630px;
  top: 980px;
  pointer-events: none;
}
.wm-big {
  font-family: "Noto Sans CJK SC", sans-serif;
  font-weight: 700;
  font-size: 41px;
  fill: #fff;
  opacity: .42;
}
.wm-small {
  font-family: "Liberation Sans", sans-serif;
  font-size: 14px;
  fill: #fff;
  opacity: .5;
}
</style>
